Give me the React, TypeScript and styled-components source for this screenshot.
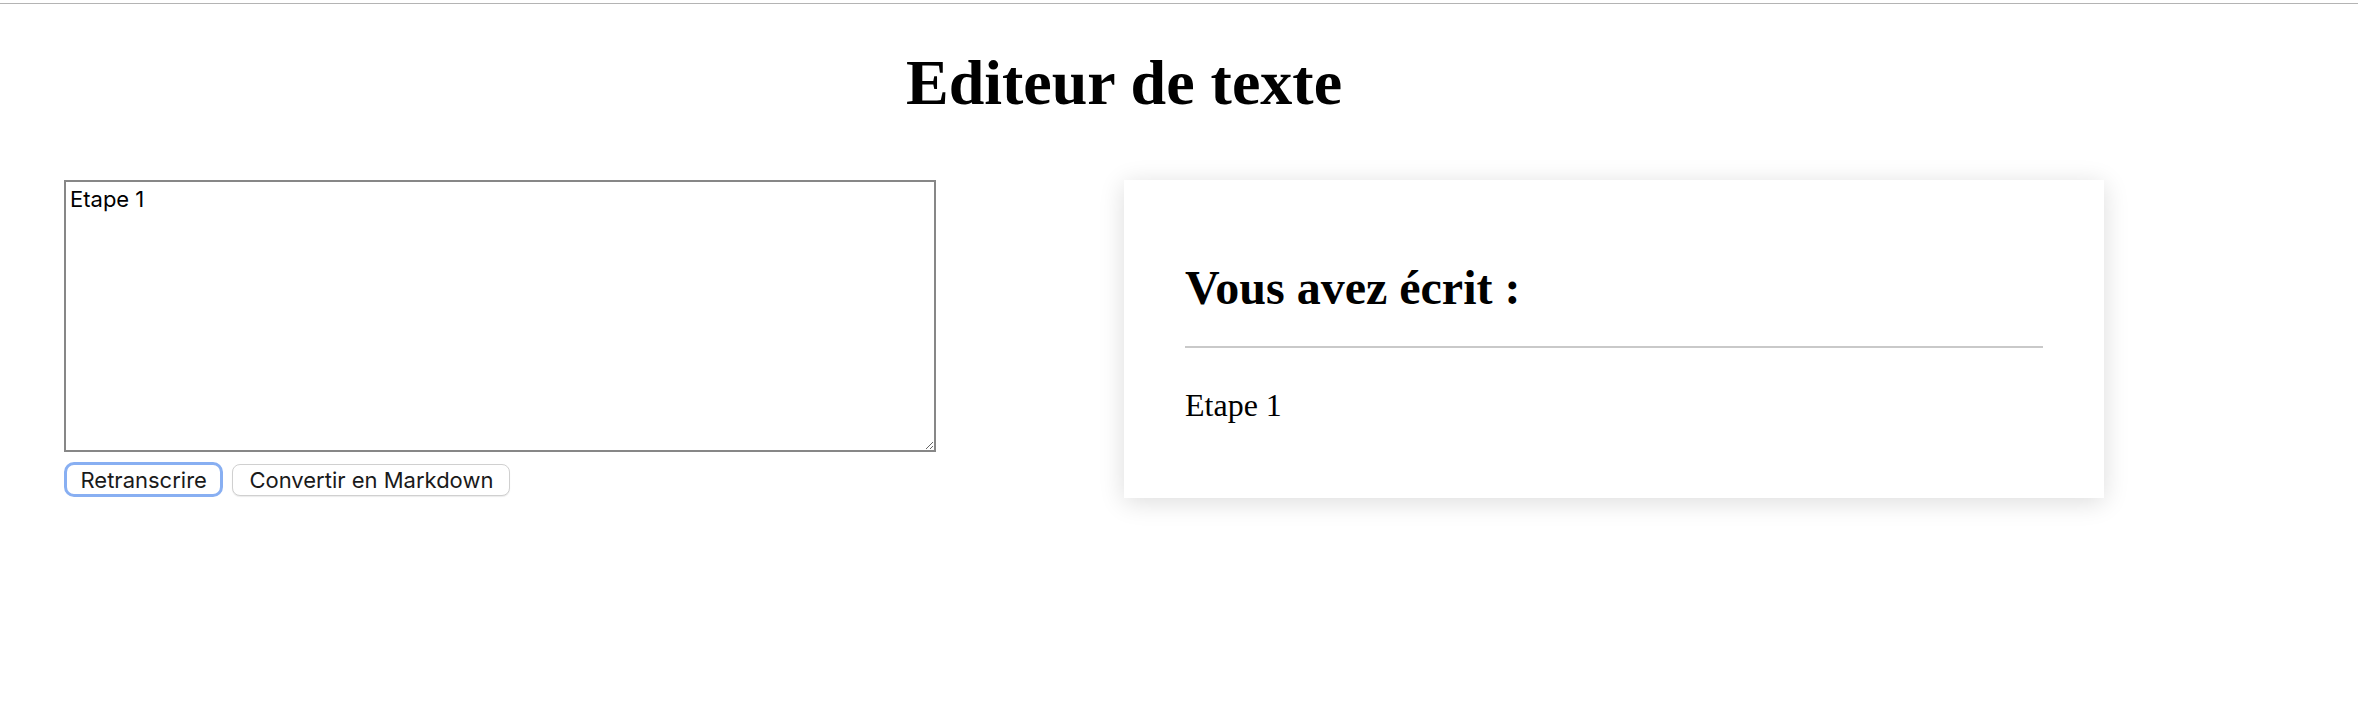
import styled, { createGlobalStyle } from "styled-components";

const GlobalStyle = createGlobalStyle`
  html, body {
    margin: 0;
    padding: 0;
    background: #ffffff;
  }

  body {
    font-family: "Liberation Serif", "Times New Roman", serif;
    color: #000000;
  }
`;

const TopRule = styled.div`
  height: 1px;
  margin-top: 3px;
  background-color: #b4b4b4;
`;

const Page = styled.main`
  width: 2216px;
  padding: 0 16px 120px;
`;

const Title = styled.h1`
  margin: 42px 0 60px;
  font-size: 64px;
  line-height: 74px;
  font-weight: 700;
  text-align: center;
`;

const Columns = styled.div`
  display: grid;
  grid-template-columns: 1108px 1108px;
  align-items: start;
`;

const EditorColumn = styled.section`
  padding-left: 48px;
  display: flex;
  flex-direction: column;
`;

const Editor = styled.textarea`
  box-sizing: border-box;
  width: 872px;
  height: 272px;
  margin: 0;
  padding: 4px;
  border: 2px solid #878787;
  border-radius: 0;
  font-family: Inter, "Liberation Sans", Arial, sans-serif;
  font-size: 22px;
  line-height: 26px;
  color: #000000;
  resize: both;
  outline: none;
`;

const ButtonRow = styled.div`
  display: flex;
  align-items: center;
  gap: 9px;
  margin-top: 10px;
`;

const Button = styled.button<{ $focused?: boolean }>`
  box-sizing: border-box;
  height: ${({ $focused }) => ($focused ? "35px" : "32px")};
  padding: 0 ${({ $focused }) => ($focused ? "13.5px" : "16px")};
  border: ${({ $focused }) => ($focused ? "3.5px solid #88aff2" : "1.5px solid #d0d0d0")};
  border-radius: ${({ $focused }) => ($focused ? "10px" : "8px")};
  background: #ffffff;
  box-shadow: ${({ $focused }) => ($focused ? "none" : "0 1px 1px rgba(0, 0, 0, 0.08)")};
  font-family: Inter, "Liberation Sans", Arial, sans-serif;
  font-size: 22px;
  color: #1a1a1a;
  cursor: pointer;
`;

const PreviewColumn = styled.section`
  display: flex;
`;

const PreviewCard = styled.article`
  box-sizing: border-box;
  width: 980px;
  height: 318px;
  padding: 40px 61px;
  background: #ffffff;
  box-shadow: 0 4px 24px rgba(0, 0, 0, 0.14);
`;

const PreviewTitle = styled.h2`
  margin: 40px 0 30px;
  font-size: 48px;
  line-height: 56px;
  font-weight: 700;
`;

const Divider = styled.hr`
  margin: 0;
  border: none;
  height: 2px;
  background-color: #c9c9c9;
`;

const PreviewText = styled.p`
  margin: 38px 0 0;
  font-size: 32px;
  line-height: 38px;
  white-space: pre-wrap;
`;

export default function App() {
  const text = "Etape 1";

  return (
    <>
      <GlobalStyle />
      <TopRule />
      <Page>
        <Title>Editeur de texte</Title>
        <Columns>
          <EditorColumn>
            <Editor defaultValue={text} />
            <ButtonRow>
              <Button $focused>Retranscrire</Button>
              <Button>Convertir en Markdown</Button>
            </ButtonRow>
          </EditorColumn>
          <PreviewColumn>
            <PreviewCard>
              <PreviewTitle>Vous avez écrit :</PreviewTitle>
              <Divider />
              <PreviewText>{text}</PreviewText>
            </PreviewCard>
          </PreviewColumn>
        </Columns>
      </Page>
    </>
  );
}
